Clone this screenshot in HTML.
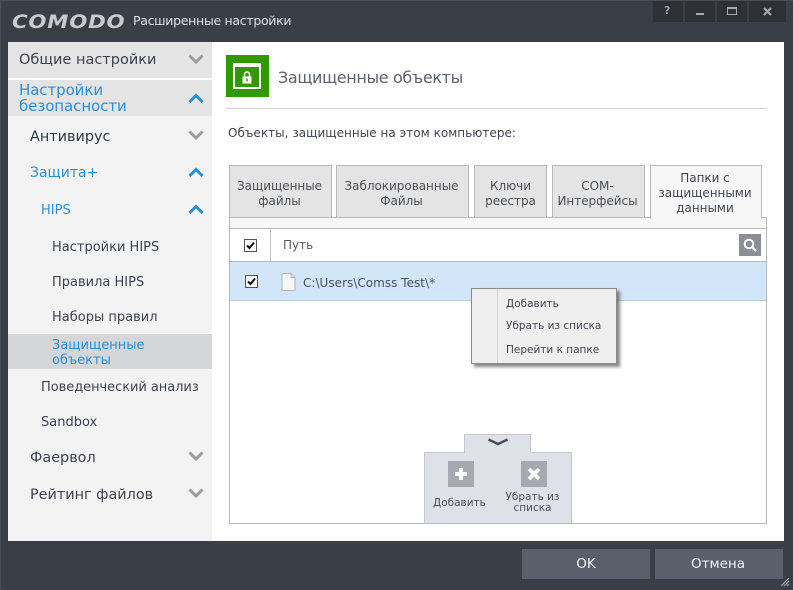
<!DOCTYPE html>
<html><head><meta charset="utf-8">
<style>
html,body{margin:0;padding:0}
body{width:793px;height:590px;overflow:hidden;background:#3a3f47;position:relative;font-family:"DejaVu Sans","Liberation Sans",sans-serif;color:#444a55}
div,svg{position:absolute;box-sizing:border-box}
.t{white-space:nowrap;line-height:1}
.s{font-size:13px;color:#3c4350}
.b{color:#2a8fd8}
.tab{background:#e4e4e4;border:1px solid #b9b9b9;border-bottom:none;top:165px;height:52px;text-align:center;font-size:12px;line-height:15px;color:#4a4f58;font-family:"DejaVu Sans",sans-serif;letter-spacing:-.03px}
.tb{top:1px;height:21px;background:#2d3136}
</style></head><body>
<div style="left:0;top:0;width:793px;height:1px;background:#4a4e55"></div>
<div style="left:0;top:0;width:1px;height:590px;background:#4a4e55"></div>
<div class="t" style="left:12px;top:11px;font:italic bold 19px 'DejaVu Sans',sans-serif;letter-spacing:.7px;color:#c8cacc;transform:scaleX(1.12);transform-origin:left">COMODO</div>
<div class="t" style="left:133px;top:15px;font-size:12.500px;color:#d8e2ec;font-family:'DejaVu Sans',sans-serif;letter-spacing:-.3px">Расширенные настройки</div>
<div class="tb" style="left:653px;width:30px"></div>
<div class="tb" style="left:685px;width:30px"></div>
<div class="tb" style="left:717px;width:30px"></div>
<div class="tb" style="left:749px;width:37px"></div>
<div class="t" style="left:664px;top:5px;font-size:11px;font-weight:bold;color:#9a9da2">?</div>
<div style="left:696px;top:13px;width:8px;height:2px;background:#a5a8ac"></div>
<div style="left:727px;top:7px;width:10px;height:8px;border:1px solid #a5a8ac;border-top-width:2px"></div>
<svg style="left:763px;top:7px" width="9" height="9" viewBox="0 0 9 9"><path d="M1 1L8 8M8 1L1 8" stroke="#a5a8ac" stroke-width="2.200"/></svg>

<div style="left:8px;top:42px;width:776px;height:499px;background:#fff"></div>
<div style="left:8px;top:42px;width:204px;height:499px;background:#f3f3f3"></div>
<div style="left:8px;top:42px;width:204px;height:36px;background:#e4e4e4"></div>
<div style="left:8px;top:78px;width:204px;height:2px;background:#fff"></div>
<div style="left:8px;top:80px;width:204px;height:36px;background:#e4e4e4"></div>
<div style="left:8px;top:334px;width:204px;height:35px;background:#d5d6d8"></div>

<div class="t" style="left:19px;top:53px;font-size:14.500px;color:#3c4350">Общие настройки</div>
<div class="t b" style="left:19px;top:83px;font-size:15px;letter-spacing:-.08px">Настройки</div>
<div class="t b" style="left:19px;top:99px;font-size:15px;letter-spacing:-.08px">безопасности</div>
<div class="t" style="left:30px;top:130px;font-size:14.400px;color:#2f3744">Антивирус</div>
<div class="t b" style="left:30px;top:166px;font-size:14px">Защита+</div>
<div class="t b" style="left:41px;top:204px;font-size:13px">HIPS</div>
<div class="t s" style="left:52px;top:241px">Настройки HIPS</div>
<div class="t s" style="left:52px;top:276px">Правила HIPS</div>
<div class="t s" style="left:52px;top:311px">Наборы правил</div>
<div class="t s b" style="left:52px;top:339px;color:#2a8fd8">Защищенные</div>
<div class="t s b" style="left:52px;top:354px;color:#2a8fd8">объекты</div>
<div class="t s" style="left:41px;top:381px;letter-spacing:-.05px">Поведенческий анализ</div>
<div class="t s" style="left:41px;top:416px">Sandbox</div>
<div class="t" style="left:30px;top:451px;font-size:14.400px;color:#3c4350">Фаервол</div>
<div class="t" style="left:30px;top:488px;font-size:14.400px;color:#3c4350">Рейтинг файлов</div>

<svg style="left:188px;top:54px" width="16" height="11"><path d="M1.500 1.500L8 8L14.500 1.500" fill="none" stroke="#9a9ca3" stroke-width="3"/></svg>
<svg style="left:188px;top:93px" width="16" height="11"><path d="M1.500 9L8 2.500L14.500 9" fill="none" stroke="#2a8fd8" stroke-width="3"/></svg>
<svg style="left:188px;top:130px" width="16" height="11"><path d="M1.500 1.500L8 8L14.500 1.500" fill="none" stroke="#9a9ca3" stroke-width="3"/></svg>
<svg style="left:188px;top:167px" width="16" height="11"><path d="M1.500 9L8 2.500L14.500 9" fill="none" stroke="#2a8fd8" stroke-width="3"/></svg>
<svg style="left:188px;top:204px" width="16" height="11"><path d="M1.500 9L8 2.500L14.500 9" fill="none" stroke="#2a8fd8" stroke-width="3"/></svg>
<svg style="left:188px;top:451px" width="16" height="11"><path d="M1.500 1.500L8 8L14.500 1.500" fill="none" stroke="#9a9ca3" stroke-width="3"/></svg>
<svg style="left:188px;top:488px" width="16" height="11"><path d="M1.500 1.500L8 8L14.500 1.500" fill="none" stroke="#9a9ca3" stroke-width="3"/></svg>

<div style="left:226px;top:55px;width:43px;height:42px;background:#339900"></div>
<div style="left:233px;top:63px;width:28px;height:26px;border:2px solid #fff;border-top-width:4px"></div>
<svg style="left:241px;top:70px" width="12" height="14" viewBox="0 0 12 14"><path d="M3.500 7V4.500a2.500 2.500 0 0 1 5 0V7" fill="none" stroke="#fff" stroke-width="1.600"/><rect x="1.500" y="6.500" width="9" height="7" fill="#fff"/><rect x="5.300" y="8.500" width="1.400" height="3" fill="#339900"/></svg>
<div class="t" style="left:278px;top:70px;font-size:16px;color:#5a6270;letter-spacing:-.36px">Защищенные объекты</div>
<div style="left:226px;top:108px;width:541px;height:1px;background:#d2d2d2"></div>
<div class="t" style="left:228px;top:127px;font-size:12px;color:#3e4450;letter-spacing:.03px">Объекты, защищенные на этом компьютере:</div>

<div class="tab" style="left:229px;width:103px;padding:13px 2px 0 0">Защищенные<br>файлы</div>
<div class="tab" style="left:336px;width:133px;padding:13px 2px 0 0">Заблокированные<br>Файлы</div>
<div class="tab" style="left:474px;width:73px;padding-top:13px">Ключи<br>реестра</div>
<div class="tab" style="left:552px;width:93px;padding:13px 2px 0 0">COM-<br>Интерфейсы</div>

<div style="left:229px;top:217px;width:538px;height:307px;border:1px solid #b9b9b9;background:#fff"></div>
<div style="left:230px;top:218px;width:536px;height:10px;background:#f7f7f7"></div>
<div style="left:230px;top:228px;width:536px;height:1px;background:#b9b9b9"></div>
<div style="left:230px;top:261px;width:536px;height:1px;background:#b9b9b9"></div>
<div style="left:270px;top:229px;width:1px;height:32px;background:#c4c4c4"></div>
<div class="tab" style="left:650px;width:112px;height:54px;background:#f7f7f7;padding:5px 2px 0 0;color:#3e4450">Папки с<br>защищенными<br>данными</div>

<div style="left:244px;top:239px;width:13px;height:13px;border:1px solid #555;background:#fff"></div>
<svg style="left:245px;top:240px" width="11" height="11"><path d="M2 5.500L4.500 8L9 2.500" fill="none" stroke="#111" stroke-width="2"/></svg>
<div class="t" style="left:283px;top:239px;font-size:12px;color:#555b66">Путь</div>
<div style="left:739px;top:234px;width:22px;height:22px;background:#8b8f96"></div>
<svg style="left:742px;top:237px" width="16" height="16"><circle cx="7" cy="7" r="4.300" fill="none" stroke="#fff" stroke-width="2"/><path d="M10 10L14 14" stroke="#fff" stroke-width="2.400"/></svg>

<div style="left:230px;top:262px;width:536px;height:39px;background:#d2e6fa;border-bottom:1px solid #b5cfe8"></div>
<div style="left:245px;top:275px;width:13px;height:13px;border:1px solid #555;background:#fff"></div>
<svg style="left:246px;top:276px" width="11" height="11"><path d="M2 5.500L4.500 8L9 2.500" fill="none" stroke="#111" stroke-width="2"/></svg>
<svg style="left:281px;top:273px" width="15" height="18"><path d="M1 .5H10L14 4.500V17.500H1Z" fill="#f7f7f7" stroke="#b5b5b5"/><path d="M10 .5V4.500H14" fill="#ddd" stroke="#b5b5b5"/></svg>
<div class="t" style="left:303px;top:277px;font-size:12px;color:#4a505c;letter-spacing:.03px">C:\Users\Comss Test\*</div>

<div style="left:471px;top:288px;width:146px;height:76px;background:#efefef;border:1px solid #8a8a8a;box-shadow:3px 3px 3px rgba(70,70,70,.65)"></div>
<div style="left:497px;top:289px;width:1px;height:74px;background:#d4d4d4"></div>
<div class="t" style="left:506px;top:299px;font-size:10.500px;color:#3e4450">Добавить</div>
<div class="t" style="left:506px;top:321px;font-size:10.500px;color:#3e4450">Убрать из списка</div>
<div class="t" style="left:506px;top:345px;font-size:10.500px;color:#3e4450">Перейти к папке</div>

<div style="left:464px;top:434px;width:67px;height:20px;background:#dfe1e8;border:1px solid #c5c7cd;border-bottom:none"></div>
<div style="left:424px;top:452px;width:148px;height:71px;background:#dfe1e8;border:1px solid #c5c7cd;border-bottom:none"></div>
<div style="left:465px;top:451px;width:65px;height:2px;background:#dfe1e8"></div>
<svg style="left:487px;top:438px" width="22" height="10"><path d="M1.500 1.500L11 6L20.500 1.500" fill="none" stroke="#4a4d52" stroke-width="2.400"/></svg>
<div style="left:448px;top:461px;width:26px;height:26px;background:#a6a9b0"></div>
<svg style="left:454px;top:467px" width="14" height="14"><path d="M7 1V13M1 7H13" stroke="#fff" stroke-width="4"/></svg>
<div style="left:521px;top:461px;width:26px;height:26px;background:#a6a9b0"></div>
<svg style="left:527px;top:467px" width="14" height="14"><path d="M2 2L12 12M12 2L2 12" stroke="#fff" stroke-width="3.800"/></svg>
<div class="t" style="left:433px;top:498px;font-size:10.500px;color:#4a505c">Добавить</div>
<div class="t" style="left:500px;top:492px;width:65px;text-align:center;font-size:10.500px;color:#4a505c;line-height:11px">Убрать из<br>списка</div>

<div style="left:522px;top:549px;width:128px;height:30px;background:#5a606b"></div>
<div style="left:655px;top:549px;width:128px;height:30px;background:#5a606b"></div>
<div class="t" style="left:522px;top:558px;width:128px;text-align:center;font-size:13.500px;color:#f2f4f6">OK</div>
<div class="t" style="left:655px;top:558px;width:126px;text-align:center;font-size:13.500px;color:#f2f4f6">Отмена</div>
<svg style="left:780px;top:577px" width="10" height="10"><path d="M1 9L9 1M4 9L9 4M7 9L9 7" stroke="#aeb1b5" stroke-width="1"/></svg>
</body></html>
